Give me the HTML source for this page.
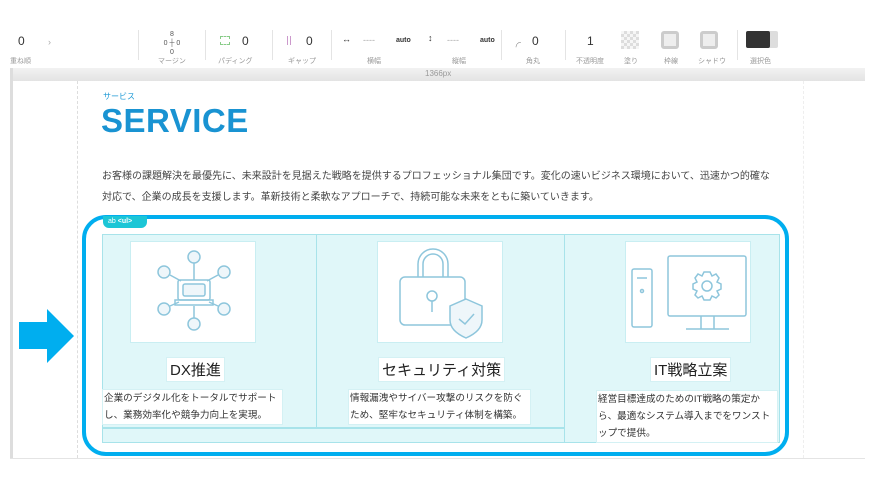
<!DOCTYPE html>
<html><head><meta charset="utf-8"><style>
*{margin:0;padding:0;box-sizing:border-box}
body{width:875px;height:491px;background:#fff;position:relative;overflow:hidden;font-family:"Liberation Sans","Noto Sans CJK JP",sans-serif;color:#333}
.a{position:absolute}
.lbl{position:absolute;top:56px;font-size:7px;color:#999;white-space:nowrap}
.val{position:absolute;top:34px;font-size:12px;color:#333}
.sep{position:absolute;top:30px;width:1px;height:30px;background:#e4e4e4}
.card{position:absolute;top:234px;background:#e0f7f9;border:1px solid #a8e3ea}
.img{position:absolute;background:#fff;border:1px solid #c9eef2}
.ttl{position:absolute;background:#fff;font-size:15px;color:#222;padding:1px 3px;border:1px solid #d4f1f4}
.desc{position:absolute;background:#fff;font-size:9.6px;line-height:17px;color:#333;padding:0 1px;border:1px solid #d4f1f4}
</style></head><body>
<!-- toolbar -->
<div class="val" style="left:18px">0</div><div class="a" style="left:48px;top:37px;font-size:9px;color:#aaa">›</div>
<div class="lbl" style="left:10px">重ね順</div>
<div class="sep" style="left:138px"></div>
<div class="a" style="left:157px;top:30px;font-size:7px;color:#555;line-height:9px;width:30px;text-align:center">8<br>0 ┼ 0<br>0</div>
<div class="lbl" style="left:158px">マージン</div>
<div class="sep" style="left:205px"></div>
<div class="a" style="left:220px;top:36px;width:10px;height:9px;border:1px dashed #8c8"></div><div class="val" style="left:242px">0</div>
<div class="lbl" style="left:218px">パディング</div>
<div class="sep" style="left:272px"></div>
<div class="a" style="left:287px;top:36px;width:4px;height:9px;border-left:1px solid #c9c;border-right:1px solid #c9c"></div><div class="val" style="left:306px">0</div>
<div class="lbl" style="left:288px">ギャップ</div>
<div class="sep" style="left:331px"></div>
<div class="a" style="left:342px;top:34px;font-size:9px">↔</div><div class="a" style="left:363px;top:35px;font-size:9px;color:#aaa">----</div><div class="a" style="left:396px;top:37px;font-size:7px;font-weight:bold">auto</div>
<div class="lbl" style="left:367px">横幅</div>
<div class="a" style="left:428px;top:33px;font-size:9px">↕</div><div class="a" style="left:447px;top:35px;font-size:9px;color:#aaa">----</div><div class="a" style="left:480px;top:37px;font-size:7px;font-weight:bold">auto</div>
<div class="lbl" style="left:452px">縦幅</div>
<div class="sep" style="left:501px"></div>
<div class="a" style="left:511px;top:34px;font-size:10px;color:#555">╭</div><div class="val" style="left:532px">0</div>
<div class="lbl" style="left:526px">角丸</div>
<div class="sep" style="left:565px"></div>
<div class="val" style="left:587px">1</div><div class="lbl" style="left:576px">不透明度</div>
<div class="a" style="left:621px;top:31px;width:18px;height:18px;background:repeating-conic-gradient(#ddd 0 25%,#f6f6f6 0 50%) 0 0/6px 6px"></div>
<div class="lbl" style="left:624px">塗り</div>
<div class="a" style="left:661px;top:31px;width:18px;height:18px;border:3px solid #ccc;border-radius:3px;background:#eee"></div><div class="lbl" style="left:664px">枠線</div>
<div class="a" style="left:700px;top:31px;width:18px;height:18px;border:3px solid #ccc;border-radius:3px;background:#eee"></div><div class="lbl" style="left:698px">シャドウ</div>
<div class="sep" style="left:737px"></div>
<div class="a" style="left:746px;top:31px;width:32px;height:17px;background:#ddd;border-radius:2px"></div><div class="a" style="left:746px;top:31px;width:24px;height:17px;background:#333;border-radius:2px"></div>
<div class="lbl" style="left:750px">選択色</div>
<!-- ruler -->
<div class="a" style="left:10px;top:68px;width:855px;height:13px;background:linear-gradient(#f2f2f2,#e3e3e3)"></div>
<div class="a" style="left:425px;top:69px;font-size:8px;color:#999">1366px</div>
<div class="a" style="left:10px;top:68px;width:3px;height:391px;background:#ddd"></div>
<div class="a" style="left:10px;top:458px;width:855px;height:1px;background:#e4e4e4"></div>
<div class="a" style="left:77px;top:81px;height:377px;border-left:1px dashed #ddd"></div>
<div class="a" style="left:803px;top:81px;height:377px;border-left:1px dashed #eee"></div>
<!-- heading -->
<div class="a" style="left:103px;top:91px;font-size:8px;color:#1e9ad6">サービス</div>
<div class="a" style="left:101px;top:102px;font-size:33px;font-weight:bold;color:#1993d2;letter-spacing:.5px">SERVICE</div>
<div class="a" style="left:102px;top:166px;width:672px;font-size:10px;line-height:21px;color:#444">お客様の課題解決を最優先に、未来設計を見据えた戦略を提供するプロフェッショナル集団です。変化の速いビジネス環境において、迅速かつ的確な対応で、企業の成長を支援します。革新技術と柔軟なアプローチで、持続可能な未来をともに築いていきます。</div>
<!-- arrow -->
<div class="a" style="left:19px;top:322px;width:29px;height:27px;background:#00aeef"></div>
<div class="a" style="left:47px;top:309px;width:0;height:0;border-top:27px solid transparent;border-bottom:27px solid transparent;border-left:27px solid #00aeef"></div>
<!-- cards -->
<div class="card" style="left:102px;width:215px;height:194px"></div>
<div class="card" style="left:316px;width:249px;height:194px"></div>
<div class="card" style="left:564px;width:216px;height:209px"></div>
<div class="a" style="left:102px;top:428px;width:463px;height:15px;background:#e0f7f9;border:1px solid #a8e3ea"></div>
<div class="img" style="left:130px;top:241px;width:126px;height:102px">
<svg width="126" height="102" viewBox="0 0 126 102" fill="none" stroke="#8ec6dc" stroke-width="1.5"><circle cx="63" cy="15" r="6" fill="#eef6fa"/><circle cx="33" cy="30" r="6" fill="#eef6fa"/><circle cx="93" cy="30" r="6" fill="#eef6fa"/><circle cx="33" cy="67" r="6" fill="#eef6fa"/><circle cx="93" cy="67" r="6" fill="#eef6fa"/><circle cx="63" cy="82" r="6" fill="#eef6fa"/><path d="M63 21V38M39 33L50 39M87 33L76 39M39 64L48 60M87 64L78 60M63 76V64"/><rect x="47" y="38" width="32" height="20" rx="2"/><rect x="52" y="42" width="22" height="12" rx="2" fill="#eef6fa"/><path d="M44 58H82V63H44Z"/></svg></div>
<div class="img" style="left:377px;top:241px;width:126px;height:102px">
<svg width="126" height="102" viewBox="0 0 126 102" fill="none" stroke="#8ec6dc" stroke-width="1.5"><path d="M40 35V22A15 15 0 0 1 70 22V35M45 35V22A10 10 0 0 1 65 22V35"/><rect x="22" y="35" width="65" height="48" rx="5"/><circle cx="54" cy="54" r="5"/><path d="M54 59V70"/><path d="M88 57L104 64V78Q104 89 88 96Q72 89 72 78V64Z" fill="#eef6fa"/><path d="M81 77L87 82L96 72"/></svg></div>
<div class="img" style="left:625px;top:241px;width:126px;height:102px">
<svg width="126" height="102" viewBox="0 0 126 102" fill="none" stroke="#8ec6dc" stroke-width="1.5"><rect x="6" y="27" width="20" height="58" rx="2"/><path d="M11 36H21"/><circle cx="16" cy="49" r="1.5"/><rect x="42" y="14" width="78" height="60" rx="2"/><path d="M75 74V87M88 74V87M60 87H103"/><circle cx="81" cy="44" r="5"/><path d="M78 30H84L86 34L90 32L93 36L91 40L95 42V47L91 49L93 53L90 56L86 54L84 58H78L76 54L72 56L69 53L71 49L67 47V42L71 40L69 36L72 32L76 34Z"/></svg></div>
<div class="ttl" style="left:166px;top:357px">DX推進</div>
<div class="ttl" style="left:378px;top:357px">セキュリティ対策</div>
<div class="ttl" style="left:650px;top:357px">IT戦略立案</div>
<div class="desc" style="left:102px;top:389px;width:181px">企業のデジタル化をトータルでサポートし、業務効率化や競争力向上を実現。</div>
<div class="desc" style="left:348px;top:389px;width:183px">情報漏洩やサイバー攻撃のリスクを防ぐため、堅牢なセキュリティ体制を構築。</div>
<div class="desc" style="left:596px;top:390px;width:182px">経営目標達成のためのIT戦略の策定から、最適なシステム導入までをワンストップで提供。</div>
<!-- selection -->
<div class="a" style="left:82px;top:215px;width:707px;height:241px;border:4px solid #00aeef;border-radius:24px"></div>
<div class="a" style="left:103px;top:216px;width:44px;height:12px;background:#1cc6d6;border-radius:0 0 6px 6px;font-size:7px;color:#fff;padding-left:5px;line-height:12px">ab <b>&lt;ul&gt;</b></div>
</body></html>
